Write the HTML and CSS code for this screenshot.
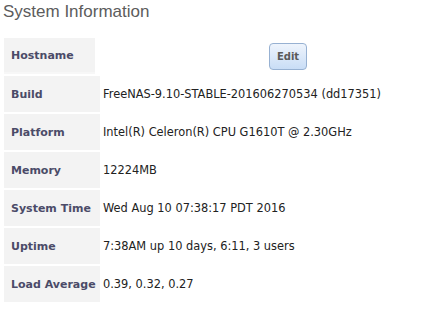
FILE: index.html
```html
<!DOCTYPE html>
<html lang="en">
<head>
	<meta charset="UTF-8">
	<title>System Information</title>
	<link rel="stylesheet" href="styles.css">
</head>
<body>
	<div id="sysinfo">
		<h2 class="title">System Information</h2>
		<div class="info-grid">
			<div class="label label-host">Hostname</div>
			<div class="value value-host"><button class="btn-edit">Edit</button></div>

			<div class="label">Build</div>
			<div class="value">FreeNAS-9.10-STABLE-201606270534 (dd17351)</div>

			<div class="label">Platform</div>
			<div class="value">Intel(R) Celeron(R) CPU G1610T @ 2.30GHz</div>

			<div class="label">Memory</div>
			<div class="value">12224MB</div>

			<div class="label">System Time</div>
			<div class="value">Wed Aug 10 07:38:17 PDT 2016</div>

			<div class="label">Uptime</div>
			<div class="value">7:38AM up 10 days, 6:11, 3 users</div>

			<div class="label">Load Average</div>
			<div class="value">0.39, 0.32, 0.27</div>
		</div>
	</div>
</body>
</html>
```

FILE: styles.css
```css
* {
	margin: 0;
	padding: 0;
	box-sizing: border-box;
}
body {
	background: #fff;
	font-family: "DejaVu Sans", Verdana, sans-serif;
	font-size: 11px;
	color: #222;
}
#sysinfo {
	padding: 0 0 0 4px;
}
.title {
	font-family: "Liberation Sans", Arial, sans-serif;
	font-size: 17px;
	font-weight: normal;
	color: #5c5c5c;
	line-height: 24px;
	margin-left: -1px;
	margin-bottom: 14px;
}
.info-grid {
	display: grid;
	grid-template-columns: 96px 1fr;
	grid-auto-rows: 36px;
	row-gap: 2px;
	column-gap: 2px;
}
.label {
	background-color: #f3f3f3;
	font-weight: bold;
	color: #4b4b68;
	display: flex;
	align-items: center;
	padding-left: 7px;
	white-space: nowrap;
}
.label-host {
	width: 91px;
	height: 34px;
	box-shadow: 0 2px 0 #f7f7f7;
}
.value {
	display: flex;
	align-items: center;
	padding-left: 1px;
	font-size: 11.4px;
	white-space: nowrap;
}
.value-host {
	padding-left: 167px;
	align-items: flex-start;
	padding-top: 5px;
}
.btn-edit {
	width: 38px;
	height: 27px;
	border: 1px solid #97b1d2;
	border-radius: 4px;
	background: linear-gradient(#eef4fc, #c9ddf6);
	font-family: "DejaVu Sans", Verdana, sans-serif;
	font-size: 10px;
	font-weight: bold;
	color: #5a5a5a;
	cursor: pointer;
}
```
